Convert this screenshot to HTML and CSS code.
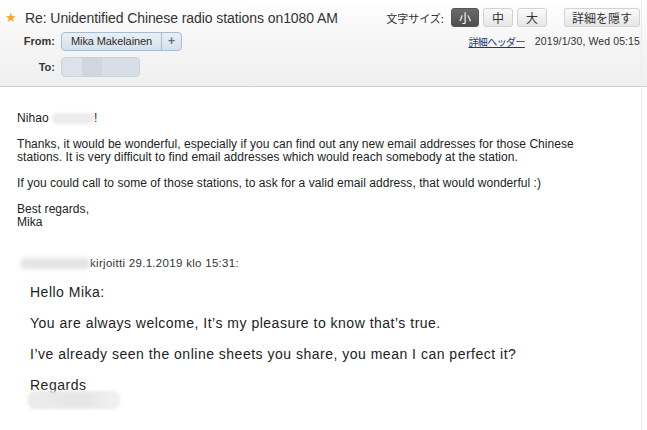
FILE: index.html
```html
<!DOCTYPE html>
<html lang="ja">
<head>
<meta charset="utf-8">
<link rel="stylesheet" href="styles.css">
</head>
<body>
<div class="page">
  <div class="header">
    <div class="row row1">
      <span class="star">★</span>
      <span class="title">Re: Unidentified Chinese radio stations on1080 AM</span>
      <span class="spacer"></span>
      <span class="fs-label">文字サイズ:</span>
      <span class="btn btn-sel">小</span>
      <span class="btn">中</span>
      <span class="btn">大</span>
      <span class="btn btn-hide">詳細を隠す</span>
    </div>
    <div class="row row2">
      <span class="label">From:</span>
      <span class="pill"><span class="pill-name">Mika Makelainen</span><span class="pill-plus">+</span></span>
      <span class="spacer"></span>
      <a class="hdr-link">詳細ヘッダー</a>
      <span class="date">2019/1/30, Wed 05:15</span>
    </div>
    <div class="row row3">
      <span class="label">To:</span>
      <span class="pill pill-blur"><span class="blur-a"></span><span class="blur-b"></span><span class="blur-c"></span></span>
    </div>
  </div>
  <div class="body">
    <p class="para">Nihao <span class="name-blur"></span>!</p>
    <p class="para">Thanks, it would be wonderful, especially if you can find out any new email addresses for those Chinese<br>stations. It is very difficult to find email addresses which would reach somebody at the station.</p>
    <p class="para">If you could call to some of those stations, to ask for a valid email address, that would wonderful :)</p>
    <p class="para">Best regards,<br>Mika</p>
    <div class="cite"><span class="cite-blur"></span>kirjoitti 29.1.2019 klo 15:31:</div>
    <div class="quote">
      <p class="qpara">Hello Mika:</p>
      <p class="qpara">You are always welcome, It’s my pleasure to know that’s true.</p>
      <p class="qpara">I’ve already seen the online sheets you share, you mean I can perfect it?</p>
      <p class="qpara qlast">Regards</p>
      <div class="sig-blur"></div>
    </div>
  </div>
</div>
</body>
</html>
```
FILE: styles.css
```css
html, body {
  margin: 0;
  padding: 0;
  background: #fff;
}
.page {
  width: 647px;
  height: 430px;
  overflow: hidden;
  font-family: "Liberation Sans", Arial, "Noto Sans CJK JP", sans-serif;
  color: #222;
  position: relative;
}
.page::after {
  content: "";
  position: absolute;
  top: 0;
  bottom: 0;
  left: 641px;
  width: 1px;
  background: #ececec;
}
.header {
  height: 78px;
  padding-top: 8px;
  background: linear-gradient(#ffffff 0%, #f7f7f7 40%, #efefef 100%);
  border-bottom: 1px solid #cfcfcf;
  display: flex;
  flex-direction: column;
  gap: 5px;
}
.row {
  display: flex;
  align-items: center;
  padding-right: 7px;
}
.row1 { height: 19px; }
.row2 { height: 18px; }
.row3 { height: 19px; margin-top: 2px; }
.spacer { flex: 1; }
.star {
  color: #f5a623;
  font-size: 13px;
  width: 12px;
  margin-left: 5px;
  margin-right: 8px;
  line-height: 1;
  font-family: "DejaVu Sans", sans-serif;
}
.title {
  font-size: 14px;
  color: #333;
  letter-spacing: -0.08px;
}
.fs-label {
  font-family: "Noto Sans CJK JP", sans-serif;
  font-size: 11px;
  color: #333;
  margin-right: 3px;
}
.btn {
  font-family: "Noto Sans CJK JP", sans-serif;
  font-size: 12px;
  color: #333;
  height: 17px;
  line-height: 17px;
  padding: 0 8px;
  border: 1px solid #d2d2d2;
  border-radius: 3px;
  background: linear-gradient(#fafafa, #e6e6e6);
  margin-left: 4px;
}
.btn-sel {
  background: linear-gradient(#6a6a6a, #4e4e4e);
  border-color: #555;
  color: #fff;
  padding: 0 7px;
}
.btn-hide {
  margin-left: 17px;
  padding: 0 7px;
}
.label {
  width: 55px;
  text-align: right;
  font-size: 11px;
  font-weight: bold;
  color: #333;
  margin-right: 6px;
}
.pill {
  display: flex;
  height: 17px;
  border: 1px solid #a9bccd;
  border-radius: 4px;
  background: linear-gradient(#e9f0f6, #d5e1ec);
  font-size: 11px;
  color: #2b2b2b;
  overflow: hidden;
}
.pill-name {
  line-height: 17px;
  padding: 0 9px 0 9px;
  border-right: 1px solid #a9bccd;
  letter-spacing: -0.1px;
}
.pill-plus {
  line-height: 17px;
  width: 19px;
  text-align: center;
  color: #5a6f85;
  font-weight: bold;
  font-size: 12px;
}
.pill-blur {
  width: 77px;
  height: 18px;
  border-color: #c9d3dc;
  background: #d9e0e8;
}
.blur-a { width: 20px; background: #dbe2ea; }
.blur-b { width: 20px; background: #cfd6de; }
.blur-c { width: 37px; background: #d8dee6; }
.hdr-link {
  font-family: "Noto Sans CJK JP", sans-serif;
  font-size: 10px;
  letter-spacing: -0.6px;
  color: #1d3a78;
  text-decoration: underline;
  margin-right: 10px;
}
.date {
  font-size: 10.5px;
  color: #333;
  letter-spacing: 0.1px;
}
.body {
  padding: 25px 0 0 17px;
}
.para {
  margin: 0 0 13px;
  font-size: 12px;
  line-height: 13px;
  letter-spacing: 0.05px;
  color: #222;
}
.name-blur {
  display: inline-block;
  width: 42px;
  height: 11px;
  vertical-align: -2px;
  background: #ececec;
  border-radius: 5px;
  filter: blur(1.5px);
}
.cite {
  display: flex;
  align-items: center;
  margin: 28px 0 0 3px;
  font-size: 11.5px;
  line-height: 13px;
  letter-spacing: 0.3px;
  color: #333;
}
.cite-blur {
  width: 70px;
  height: 11px;
  background: #e4e4e4;
  border-radius: 6px;
  filter: blur(2px);
}
.quote {
  padding: 13px 0 0 13px;
}
.qpara {
  margin: 0 0 13px;
  font-size: 14px;
  line-height: 18px;
  letter-spacing: 0.5px;
  color: #222;
}
.qlast {
  margin-bottom: 0;
  height: 12px;
  overflow: visible;
}
.sig-blur {
  width: 92px;
  height: 18px;
  margin: 3px 0 0 -2px;
  background: linear-gradient(90deg, #ececec, #e6e6e6 60%, #f2f2f2);
  border-radius: 6px;
  filter: blur(1.5px);
}
```
